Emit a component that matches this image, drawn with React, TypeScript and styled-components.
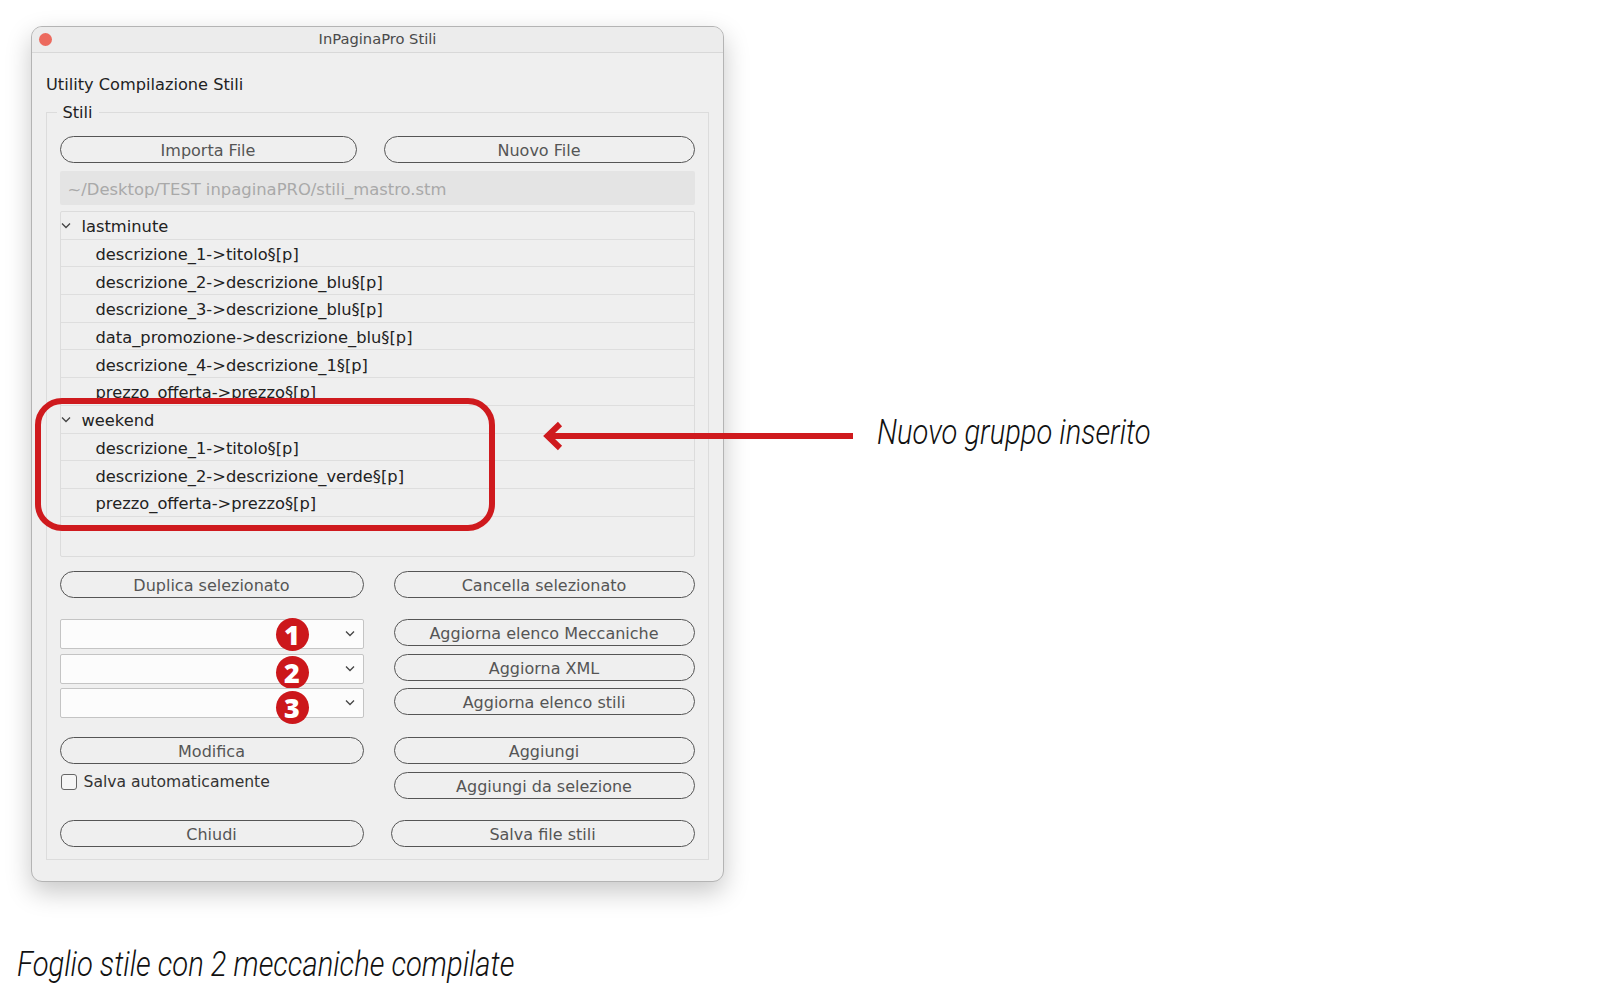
import React from "react";
import styled, { createGlobalStyle } from "styled-components";

const GlobalStyle = createGlobalStyle`
  html, body {
    margin: 0;
    background: #fff;
  }
  * {
    box-sizing: border-box;
  }
`;

const Page = styled.div`
  position: relative;
  width: 1600px;
  height: 1000px;
  padding: 26px 0 0 31px;
  overflow: hidden;
  font-family: "DejaVu Sans", sans-serif;
`;

const Window = styled.section`
  width: 693px;
  height: 856px;
  background: #efefef;
  border: 1px solid #b4b4b4;
  border-radius: 11px;
  box-shadow: 0 10px 26px rgba(0, 0, 0, 0.22);
  overflow: hidden;
`;

const TitleBar = styled.header`
  position: relative;
  height: 26px;
  padding-bottom: 2px;
  display: flex;
  align-items: center;
  justify-content: center;
  background: #ececec;
  border-bottom: 1px solid #d8d8d8;
  font-size: 14.7px;
  color: #4a4a4a;
`;

const CloseDot = styled.span`
  position: absolute;
  left: 6.5px;
  top: 5.5px;
  width: 13px;
  height: 13px;
  border-radius: 50%;
  background: #ec6a5e;
`;

const Content = styled.div`
  padding: 23px 14px 0;
`;

const Heading = styled.h1`
  margin: 0 0 6px;
  height: 20px;
  font-size: 16.2px;
  line-height: 18px;
  font-weight: 400;
  color: #222;
`;

const Group = styled.fieldset`
  margin: 0;
  height: 758px;
  padding: 0 13px 0 12.5px;
  border: 1px solid #dcdcdc;
  display: flex;
  flex-direction: column;
  min-width: 0;
`;

const Legend = styled.legend`
  margin-left: -3px;
  padding: 0 6px;
  height: 20px;
  font-size: 16.2px;
  line-height: 22px;
  color: #222;
`;

const Stack = styled.div`
  display: flex;
  flex-direction: column;
  padding-top: 14px;
`;

const Row = styled.div<{ $left: number; $right: number; $gap: number; $top?: number }>`
  display: grid;
  grid-template-columns: ${(p) => p.$left}px ${(p) => p.$right}px;
  column-gap: ${(p) => p.$gap}px;
  margin-top: ${(p) => p.$top ?? 0}px;
`;

const Pill = styled.button<{ $mb?: number }>`
  height: 27px;
  width: 100%;
  margin: 0 0 ${(p) => p.$mb ?? 0}px;
  padding: 3px 0 0;
  background: transparent;
  border: 1.5px solid #555;
  border-radius: 14px;
  font-family: inherit;
  font-size: 16px;
  line-height: 22px;
  color: #555;
`;

const PathField = styled.div`
  height: 34px;
  margin-top: 8px;
  padding: 2px 0 0 8px;
  display: flex;
  align-items: center;
  background: #e4e4e4;
  border-radius: 2px;
  font-size: 16.4px;
  color: #a9a9a9;
`;

const Tree = styled.div`
  height: 346px;
  margin: 6px 0 14px;
  border: 1px solid #dcdcdc;
  border-radius: 2px;
`;

const TreeRow = styled.div<{ $child?: boolean }>`
  height: 27.7px;
  display: flex;
  align-items: center;
  padding: 3px 0 0 ${(p) => (p.$child ? 35 : 21)}px;
  position: relative;
  border-bottom: 1.5px solid #dedede;
  font-size: 16.3px;
  color: #222;
  overflow: hidden;
`;

const TreeToggle = styled.svg`
  position: absolute;
  left: -1px;
  top: 10px;
  width: 12px;
  height: 8px;
`;

const Combo = styled.div`
  position: relative;
  height: 30px;
  background: #fcfcfc;
  border: 1.5px solid #c4c4c4;
  border-radius: 2px;
`;

const ComboChevron = styled.svg`
  position: absolute;
  right: 7px;
  top: 10px;
  width: 12px;
  height: 8px;
`;

const Badge = styled.span<{ $top: number }>`
  position: absolute;
  left: 215px;
  top: ${(p) => p.$top}px;
  width: 33px;
  height: 33px;
  border-radius: 50%;
  background: #cc171b;
  color: #fff;
  display: flex;
  align-items: center;
  justify-content: center;
  font-family: "Open Sans", sans-serif;
  font-size: 27px;
  font-weight: 800;
  line-height: 1;
`;

const CheckRow = styled.label`
  height: 18px;
  margin-top: 9px;
  display: flex;
  align-items: center;
  gap: 7px;
  font-size: 15.6px;
  color: #333;
`;

const CheckBox = styled.span`
  width: 16px;
  height: 16px;
  margin-left: 1px;
  background: #f6f6f6;
  border: 1.5px solid #666;
  border-radius: 3px;
`;

const Column = styled.div`
  display: flex;
  flex-direction: column;
`;

const Highlight = styled.div`
  position: absolute;
  left: 35px;
  top: 398px;
  width: 460px;
  height: 133px;
  border: 6px solid #cf1a1e;
  border-radius: 27px;
`;

const Arrow = styled.svg`
  position: absolute;
  left: 543px;
  top: 420px;
  width: 312px;
  height: 32px;
`;

const Note = styled.div`
  position: absolute;
  left: 877px;
  top: 412px;
  font-family: Roboto, sans-serif;
  font-size: 35px;
  font-weight: 300;
  font-style: italic;
  line-height: 42px;
  color: #111;
  white-space: nowrap;
  transform: scaleX(0.832);
  transform-origin: left center;
`;

const Caption = styled.p`
  margin: 62px 0 0 -14px;
  font-family: Roboto, sans-serif;
  font-size: 35px;
  font-weight: 300;
  font-style: italic;
  line-height: 42px;
  color: #111;
  white-space: nowrap;
  transform: scaleX(0.834);
  transform-origin: left center;
`;

const Chevron = () => <polyline points="2,1.5 6,5.5 10,1.5" fill="none" stroke="#444" strokeWidth="1.3" />;

const lastminute = [
  "descrizione_1->titolo§[p]",
  "descrizione_2->descrizione_blu§[p]",
  "descrizione_3->descrizione_blu§[p]",
  "data_promozione->descrizione_blu§[p]",
  "descrizione_4->descrizione_1§[p]",
  "prezzo_offerta->prezzo§[p]",
];

const weekend = [
  "descrizione_1->titolo§[p]",
  "descrizione_2->descrizione_verde§[p]",
  "prezzo_offerta->prezzo§[p]",
];

const TreeGroup = ({ name, items }: { name: string; items: string[] }) => (
  <>
    <TreeRow>
      <TreeToggle viewBox="0 0 12 8">
        <Chevron />
      </TreeToggle>
      {name}
    </TreeRow>
    {items.map((item) => (
      <TreeRow $child key={item}>
        {item}
      </TreeRow>
    ))}
  </>
);

const ComboBox = ({ n, badgeTop }: { n: number; badgeTop: number }) => (
  <Combo>
    <Badge $top={badgeTop}>{n}</Badge>
    <ComboChevron viewBox="0 0 12 8">
      <Chevron />
    </ComboChevron>
  </Combo>
);

export default function App() {
  return (
    <Page>
      <GlobalStyle />
      <Window>
        <TitleBar>
          <CloseDot />
          InPaginaPro Stili
        </TitleBar>
        <Content>
          <Heading>Utility Compilazione Stili</Heading>
          <Group>
            <Legend>Stili</Legend>
            <Stack>
              <Row $left={297} $right={311} $gap={27}>
                <Pill>Importa File</Pill>
                <Pill>Nuovo File</Pill>
              </Row>
              <PathField>~/Desktop/TEST inpaginaPRO/stili_mastro.stm</PathField>
              <Tree>
                <TreeGroup name="lastminute" items={lastminute} />
                <TreeGroup name="weekend" items={weekend} />
              </Tree>
              <Row $left={304} $right={301} $gap={30}>
                <Pill>Duplica selezionato</Pill>
                <Pill>Cancella selezionato</Pill>
              </Row>
              <Row $left={304} $right={301} $gap={30} $top={21}>
                <ComboBox n={1} badgeTop={-2} />
                <Pill>Aggiorna elenco Meccaniche</Pill>
              </Row>
              <Row $left={304} $right={301} $gap={30} $top={5}>
                <ComboBox n={2} badgeTop={1} />
                <Pill>Aggiorna XML</Pill>
              </Row>
              <Row $left={304} $right={301} $gap={30} $top={4}>
                <ComboBox n={3} badgeTop={2} />
                <Pill>Aggiorna elenco stili</Pill>
              </Row>
              <Row $left={304} $right={301} $gap={30} $top={19}>
                <Column>
                  <Pill>Modifica</Pill>
                  <CheckRow>
                    <CheckBox />
                    Salva automaticamente
                  </CheckRow>
                </Column>
                <Column>
                  <Pill $mb={8}>Aggiungi</Pill>
                  <Pill>Aggiungi da selezione</Pill>
                </Column>
              </Row>
              <Row $left={304} $right={304} $gap={27} $top={21}>
                <Pill>Chiudi</Pill>
                <Pill>Salva file stili</Pill>
              </Row>
            </Stack>
          </Group>
        </Content>
      </Window>
      <Caption>Foglio stile con 2 meccaniche compilate</Caption>
      <Highlight />
      <Arrow viewBox="0 0 312 32">
        <path d="M17 4 L4.5 16 L17 28" fill="none" stroke="#cf1a1e" strokeWidth="6" />
        <rect x="6" y="13" width="304" height="6" fill="#cf1a1e" />
      </Arrow>
      <Note>Nuovo gruppo inserito</Note>
    </Page>
  );
}
